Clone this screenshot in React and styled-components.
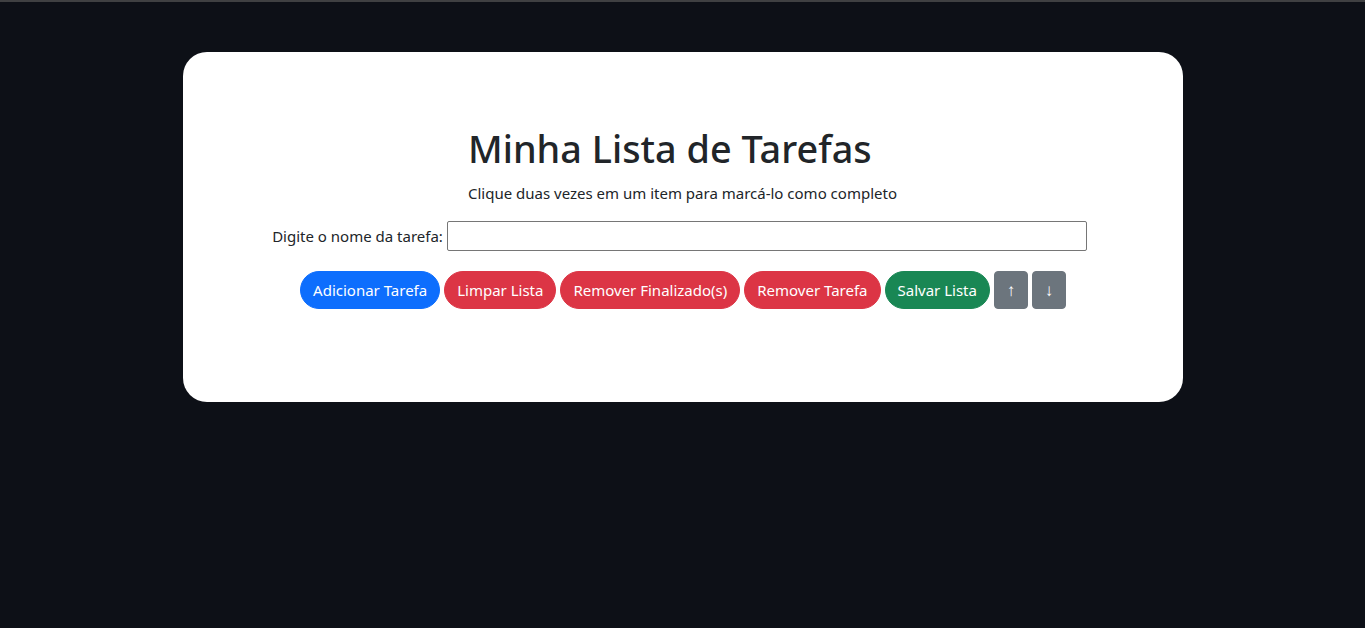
import React from "react";
import styled, { createGlobalStyle } from "styled-components";

const GlobalStyle = createGlobalStyle`
	html, body {
		margin: 0;
		padding: 0;
		background: #0d1017;
		font-family: "Noto Sans", "Open Sans", Arial, sans-serif;
		color: #212529;
	}
	* {
		box-sizing: border-box;
	}
`;

const buttons = [
	{ label: "Adicionar Tarefa", color: "#0d6efd" },
	{ label: "Limpar Lista", color: "#dc3545" },
	{ label: "Remover Finalizado(s)", color: "#dc3545" },
	{ label: "Remover Tarefa", color: "#dc3545" },
	{ label: "Salvar Lista", color: "#198754" },
];

export default function App() {
	return (
		<Page>
			<GlobalStyle />
			<TopEdge />
			<Card>
				<Header>
					<Title>Minha Lista de Tarefas</Title>
					<Hint>Clique duas vezes em um item para marcá-lo como completo</Hint>
				</Header>
				<InputRow>
					<Label htmlFor="task">Digite o nome da tarefa:</Label>
					<TaskInput id="task" type="text" />
				</InputRow>
				<ButtonRow>
					{buttons.map((b, i) => (
						<PillButton key={i} $bg={b.color}>
							{b.label}
						</PillButton>
					))}
					<ArrowButton>↑</ArrowButton>
					<ArrowButton>↓</ArrowButton>
				</ButtonRow>
			</Card>
		</Page>
	);
}

const Page = styled.div`
	min-height: 628px;
	display: flex;
	flex-direction: column;
	align-items: center;
`;

const TopEdge = styled.div`
	width: 100%;
	height: 2px;
	background: #3f4042;
`;

const Card = styled.div`
	width: 1000px;
	margin-top: 50px;
	background: #fff;
	border-radius: 24px;
	padding: 73px 0 93px;
	display: flex;
	flex-direction: column;
	align-items: center;
`;

// header
const Header = styled.div`
	display: flex;
	flex-direction: column;
	align-items: flex-start;
`;

const Title = styled.h1`
	margin: 0 0 8px;
	font-size: 37.8px;
	font-weight: 500;
	line-height: 48px;
	color: #212529;
`;

const Hint = styled.p`
	margin: 0 0 16px;
	font-size: 15px;
	line-height: 24px;
`;

// input
const InputRow = styled.div`
	display: flex;
	align-items: center;
	gap: 4px;
	margin-left: -6px;
`;

const Label = styled.label`
	font-size: 15px;
	line-height: 24px;
`;

const TaskInput = styled.input`
	width: 640px;
	height: 30px;
	border: 1px solid #767676;
	border-radius: 2px;
	padding: 1px 2px;
	font-size: 14px;
	outline: none;
`;

// buttons
const ButtonRow = styled.div`
	display: flex;
	align-items: center;
	gap: 4px;
	margin-top: 20px;
	margin-left: 1px;
`;

const PillButton = styled.button`
	height: 38px;
	padding: 6px 12px;
	border: 1px solid ${(p) => p.$bg};
	background: ${(p) => p.$bg};
	color: #fff;
	border-radius: 19px;
	font-family: inherit;
	font-size: 15px;
	line-height: 24px;
	cursor: pointer;
`;

const ArrowButton = styled(PillButton).attrs({ $bg: "#6c757d" })`
	width: 34px;
	padding: 6px 0;
	border-radius: 4px;
	font-size: 17px;
`;
